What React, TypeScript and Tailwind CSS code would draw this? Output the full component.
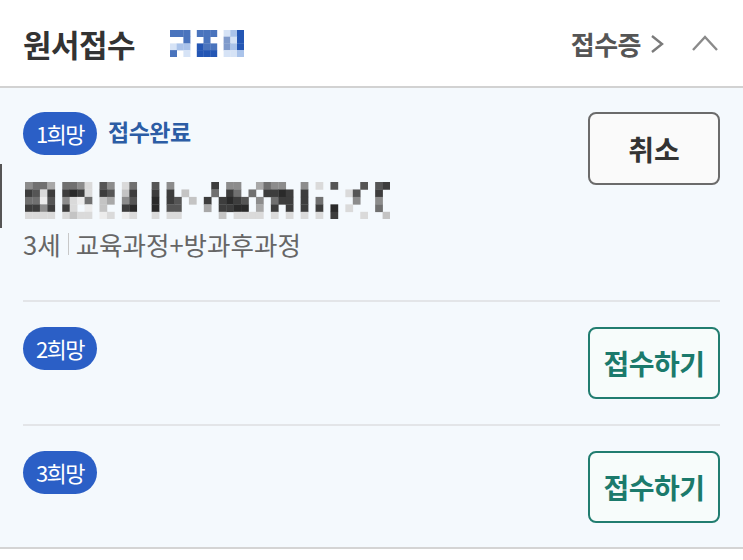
import React from 'react';

const FONT = { fontFamily: '"Noto Sans CJK KR", "Noto Sans", sans-serif' };

// mosaic helpers: one char per cell
const BLUE: Record<string, string> = {
  D: '#2456b4',
  M: '#4a74bd',
  m: '#7f9acb',
  L: '#aac3ea',
  l: '#d6e3f6',
};

const schoolRows = [
  'MMM.MMM.lLD',
  '..M..M..mlD',
  'lLL.DMM.mLD',
  'M.l.DDD.llL',
];

const GRAY = ['', '#ececec', '#dadada', '#c4c4c4', '#a8a8a8', '#8c8c8c', '#707070', '#555555', '#3d3d3d', '#2a2a2a'];

const nameRows = [
  '5664.6652.75.26..7.5.....8.55..4655..5.2.7...7.78',
  '8728.8982.87.38..8.8.3...6.86.6.8898.8.....27..8',
  '6617.5216.34.57..9.87.3.8.8987.5.688.8.6....5..5',
  '8858.82.1.3..89..9.77...4.8899.4.8.8.8.8.9.2...6',
  '2222.2322.12.12..2.22.....3.2222.2.2.2.2.8...2..3',
];

function Mosaic({ rows, cell, palette }: { rows: string[]; cell: number; palette: (c: string) => string }) {
  const cols = Math.max(...rows.map((r) => r.length));
  return (
    <svg width={cols * cell} height={rows.length * cell} className="block">
      {rows.map((row, y) =>
        row.split('').map((ch, x) => {
          const fill = palette(ch);
          if (!fill) return null;
          return <rect key={`${x}-${y}`} x={x * cell} y={y * cell} width={cell + 0.3} height={cell + 0.3} fill={fill} />;
        })
      )}
    </svg>
  );
}

const Badge: React.FC<{ n: number }> = ({ n }) => (
  <span className="inline-flex items-center justify-center w-[74px] h-[43px] rounded-full bg-[#2b5fc6] text-white text-[22px] tracking-[-1.5px]">
    {n}희망
  </span>
);

const ApplyButton: React.FC = () => (
  <button className="w-[132px] h-[72px] rounded-[8px] border-2 border-[#217d70] bg-[#f7fcfb] text-[#1b7a6c] text-[28px] font-bold tracking-[-0.5px]">
    접수하기
  </button>
);

export default function App() {
  return (
    <div className="w-[743px] h-[560px] bg-white relative overflow-hidden" style={FONT}>
      {/* header */}
      <div className="h-[88px] flex items-center pl-[23px] pr-[24px] border-b-2 border-[#d2d2d2]">
        <h1 className="text-[31px] font-bold text-[#333] tracking-[-0.5px] leading-none">원서접수</h1>
        <div className="ml-[35px] mt-[1px]">
          <Mosaic rows={schoolRows} cell={6.7} palette={(c) => BLUE[c] || ''} />
        </div>
        <div className="ml-auto flex items-center">
          <span className="text-[26px] font-semibold text-[#555] tracking-[-0.5px]">접수증</span>
          <svg width="16" height="20" viewBox="0 0 16 20" className="ml-[8px] mt-[2px]">
            <path d="M3 2 L13 10 L3 18" fill="none" stroke="#7a7a7a" strokeWidth="2.4" />
          </svg>
          <svg width="28" height="18" viewBox="0 0 28 18" className="ml-[26px]">
            <path d="M2 16 L14 3 L26 16" fill="none" stroke="#8a8a8a" strokeWidth="2.4" />
          </svg>
        </div>
      </div>

      {/* body */}
      <div className="bg-[#f4f9fd] border-b-2 border-[#d4d4d4] px-[23px]">
        {/* 1st */}
        <div className="flex pt-[24px] pb-[39px] border-b-2 border-[#e3e5e8]">
          <div className="flex-1">
            <div className="flex items-center">
              <Badge n={1} />
              <span className="ml-[11px] -mt-[4px] text-[23px] font-bold text-[#2c5da5] tracking-[-0.5px]">접수완료</span>
            </div>
            <div className="mt-[27px] ml-[2px]">
              <Mosaic rows={nameRows} cell={7.45} palette={(c) => (c === '.' ? '' : GRAY[Number(c)] || '')} />
            </div>
            <div className="mt-[8px] flex items-center text-[25.5px] text-[#666] leading-[34px]">
              <span>3세</span>
              <span className="mx-[7px] w-px h-[22px] bg-[#c8c8c8]" />
              <span>교육과정+방과후과정</span>
            </div>
          </div>
          <button className="self-start w-[132px] h-[73px] rounded-[8px] border-2 border-[#6b6b6b] bg-[#fafafa] text-[#333] text-[28px] font-bold">
            취소
          </button>
        </div>

        {/* 2nd */}
        <div className="flex items-start pt-[25px] pb-[25px] border-b-2 border-[#e3e5e8]">
          <Badge n={2} />
          <div className="ml-auto">
            <ApplyButton />
          </div>
        </div>

        {/* 3rd */}
        <div className="flex items-start pt-[25px] pb-[24px]">
          <Badge n={3} />
          <div className="ml-auto">
            <ApplyButton />
          </div>
        </div>
      </div>

      {/* left edge mark */}
      <div className="absolute left-0 top-[164px] w-[2px] h-[64px] bg-[#555]" />
    </div>
  );
}
